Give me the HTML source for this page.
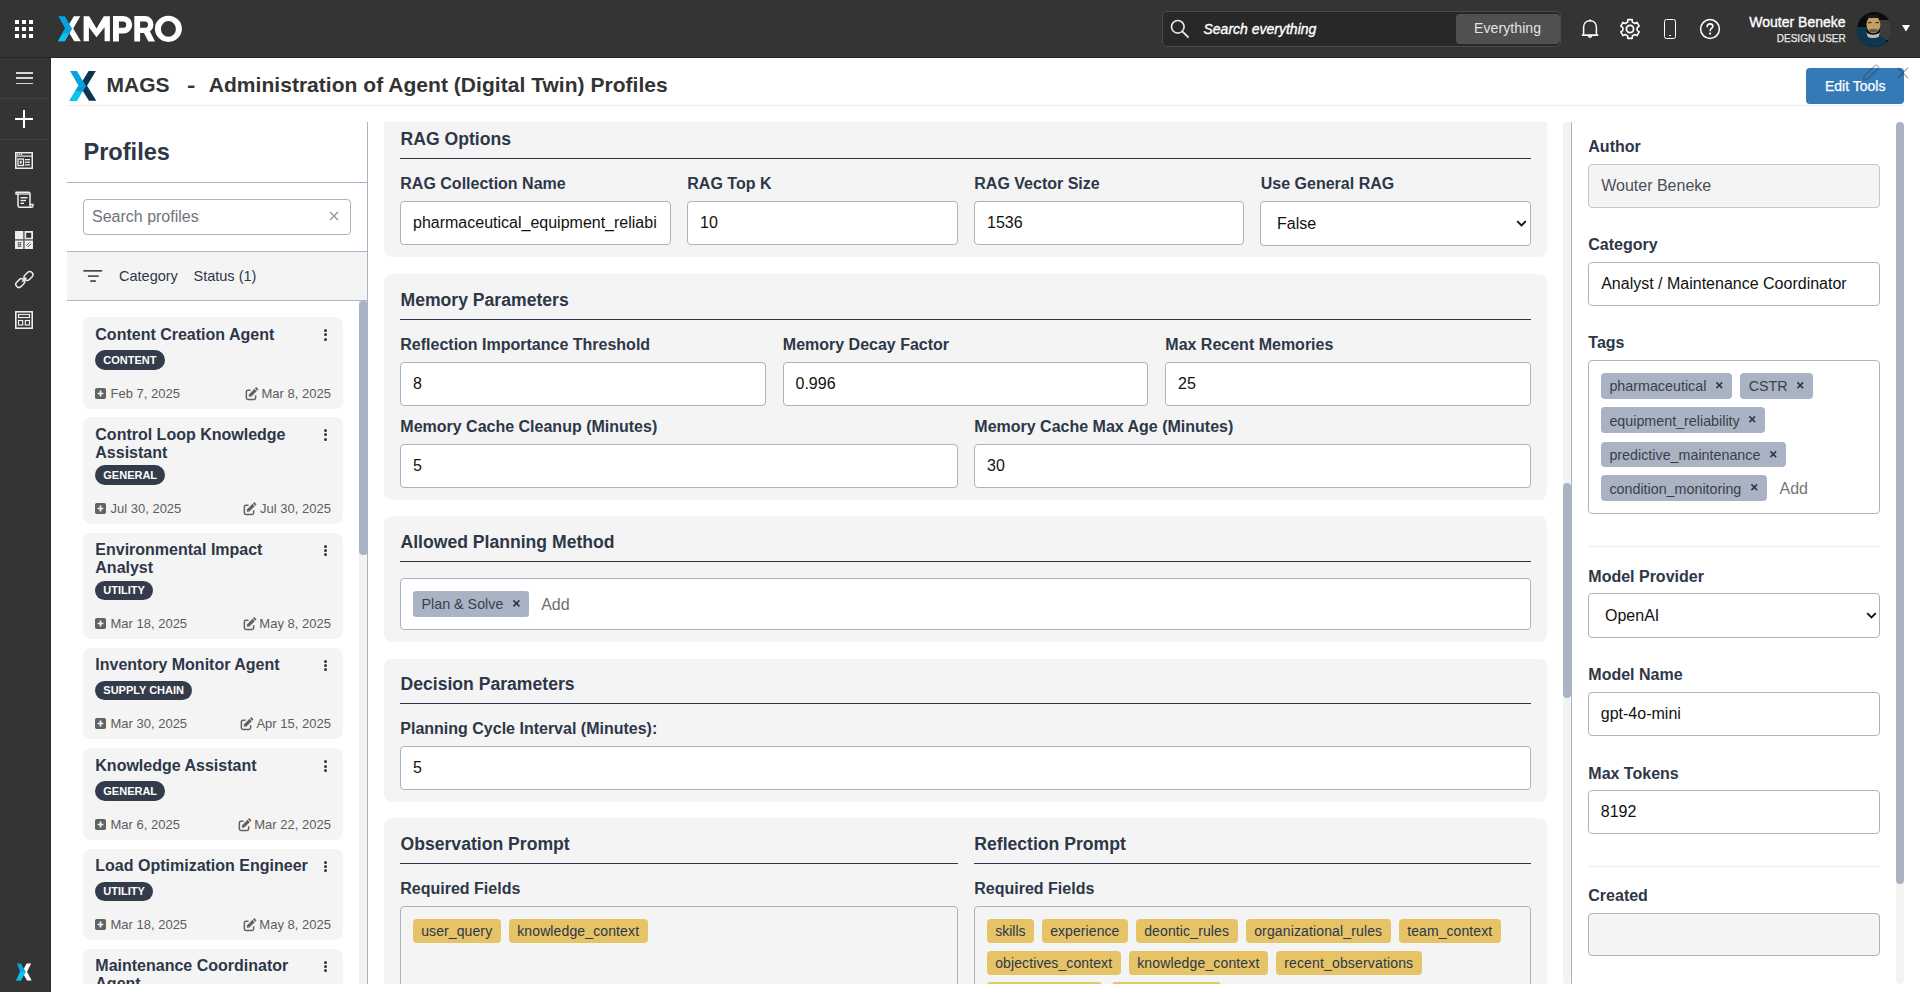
<!DOCTYPE html>
<html><head><meta charset="utf-8"><title>MAGS - Administration of Agent Profiles</title>
<style>
html,body{margin:0;padding:0;width:1920px;height:992px;overflow:hidden;background:#fff;}
body{position:relative;font-family:"Liberation Sans",sans-serif;}
.t{position:absolute;line-height:1;white-space:nowrap;}
.r{position:absolute;}
</style></head><body>
<div class="r" style="left:0.00px;top:0.00px;width:1920.00px;height:57.00px;background:#343434"></div>
<div class="r" style="left:0.00px;top:57.00px;width:1920.00px;height:1.00px;background:#262626"></div>
<div class="r" style="left:0.00px;top:58.00px;width:50.00px;height:934.00px;background:#343434"></div>
<div class="r" style="left:50.00px;top:58.00px;width:1.00px;height:934.00px;background:#2a2e31"></div>
<div class="r" style="left:14.90px;top:19.90px;width:4.30px;height:4.30px;background:#fff"></div>
<div class="r" style="left:14.90px;top:26.75px;width:4.30px;height:4.30px;background:#fff"></div>
<div class="r" style="left:14.90px;top:33.60px;width:4.30px;height:4.30px;background:#fff"></div>
<div class="r" style="left:21.75px;top:19.90px;width:4.30px;height:4.30px;background:#fff"></div>
<div class="r" style="left:21.75px;top:26.75px;width:4.30px;height:4.30px;background:#fff"></div>
<div class="r" style="left:21.75px;top:33.60px;width:4.30px;height:4.30px;background:#fff"></div>
<div class="r" style="left:28.60px;top:19.90px;width:4.30px;height:4.30px;background:#fff"></div>
<div class="r" style="left:28.60px;top:26.75px;width:4.30px;height:4.30px;background:#fff"></div>
<div class="r" style="left:28.60px;top:33.60px;width:4.30px;height:4.30px;background:#fff"></div>
<svg class="r" style="left:0px;top:0px" width="200" height="58" viewBox="0 0 200 58">
<polygon points="73.9,16.2 80.3,16.2 73.2,28.4 80.9,41.2 74.2,41.2 66.5,28.4" fill="#fff"/>
<polygon points="58.3,16.2 64.8,16.2 72,28.4 64.8,41.2 57.9,41.2 65.2,28.4" fill="#08a2de"/>
<polygon points="65.2,28.4 72,28.4 64.8,41.2 57.9,41.2" fill="#10c0ee"/>
<polygon points="65.2,28.4 72,28.4 69.2,33.2 62.4,33.2" fill="#0a9bd8"/>
<polygon points="83.6,41.2 83.6,16.2 89.2,16.2 96.5,28.4 103.8,16.2 109.9,16.2 109.9,41.2 104.6,41.2 104.6,27.3 96.5,37.2 88.9,27.3 88.9,41.2" fill="#fff"/>
<path fill-rule="evenodd" fill="#fff" d="M113,41.5 V16 H123.4 A8.8,8.8 0 0 1 123.4,33.6 H118.9 V41.5 Z M118.9,21.5 H123.05 A3.15,3.15 0 0 1 123.05,27.8 H118.9 Z"/>
<path fill-rule="evenodd" fill="#fff" d="M134.3,41.5 V16 H145 A8.5,8.5 0 0 1 145,33 H140.1 V41.5 Z M140.1,21.5 H144.85 A3.15,3.15 0 0 1 144.85,27.8 H140.1 Z"/>
<polygon points="143.5,32 149.5,30.5 155,41.5 148.4,41.5" fill="#fff"/>
<path fill-rule="evenodd" fill="#fff" d="M154.9,28.8 A13.5,13.1 0 1 0 181.9,28.8 A13.5,13.1 0 1 0 154.9,28.8 Z M160.9,28.9 A7.5,7.8 0 1 0 175.9,28.9 A7.5,7.8 0 1 0 160.9,28.9 Z"/>
</svg>
<div class="r" style="left:1162.00px;top:11.00px;width:399.00px;height:36.00px;background:#282828;border:1px solid #4a4a4a;border-radius:5px;box-sizing:border-box"></div>
<svg class="r" style="left:1170px;top:19px" width="20" height="20" viewBox="0 0 20 20">
<circle cx="7.8" cy="7.8" r="6.3" fill="none" stroke="#e6e6e6" stroke-width="1.7"/>
<line x1="12.3" y1="12.3" x2="18" y2="18" stroke="#e6e6e6" stroke-width="1.8" stroke-linecap="round"/></svg>
<div class="t" style="left:1203.50px;top:22.25px;font-size:14px;color:#ffffff;font-style:italic;-webkit-text-stroke:0.35px #fff">Search everything</div>
<div class="r" style="left:1456.00px;top:14.00px;width:104.00px;height:30.00px;background:#505050;border-radius:4px"></div>
<div class="t" style="left:1474.00px;top:21.35px;font-size:14px;color:#e4e4e4;letter-spacing:0.1px">Everything</div>
<svg class="r" style="left:1580px;top:18px" width="20" height="22" viewBox="0 0 20 22">
<path d="M3.6 16.6 V9.2 C3.6 5.2 6.2 2.7 10 2.7 C13.8 2.7 16.4 5.2 16.4 9.2 V16.6" fill="none" stroke="#fff" stroke-width="1.5"/>
<path d="M2.4 17.1 H17.7" stroke="#fff" stroke-width="1.6" stroke-linecap="round"/>
<path d="M8.4 17.6 A1.6 1.6 0 0 0 11.6 17.6" fill="none" stroke="#fff" stroke-width="1.5"/>
<path d="M8.9 2.8 L10 1.4 L11.1 2.8 Z" fill="#fff" stroke="#fff" stroke-width="0.6"/></svg>
<svg class="r" style="left:1619.3px;top:17.9px" width="22" height="22" viewBox="0 0 22 22">
<path d="M8.62 4.10 L8.84 1.65 L13.16 1.65 L13.38 4.10 L15.79 5.49 L18.02 4.45 L20.18 8.19 L18.17 9.61 L18.17 12.39 L20.18 13.81 L18.02 17.55 L15.79 16.51 L13.38 17.90 L13.16 20.35 L8.84 20.35 L8.62 17.90 L6.21 16.51 L3.98 17.55 L1.82 13.81 L3.83 12.39 L3.83 9.61 L1.82 8.19 L3.98 4.45 L6.21 5.49 Z" fill="none" stroke="#fff" stroke-width="1.6" stroke-linejoin="round"/>
<circle cx="11" cy="11" r="3.6" fill="none" stroke="#fff" stroke-width="1.8"/></svg>
<div class="r" style="left:1663.60px;top:19.10px;width:12.70px;height:19.60px;border:1.5px solid #fff;border-radius:2.5px;box-sizing:border-box"></div>
<div class="r" style="left:1669.00px;top:34.60px;width:1.80px;height:1.30px;background:#fff"></div>
<svg class="r" style="left:1699px;top:18px" width="22" height="22" viewBox="0 0 22 22">
<circle cx="11" cy="11" r="9.4" fill="none" stroke="#fff" stroke-width="1.5"/>
<path d="M8.2 8.6 C8.2 6.9 9.5 5.9 11 5.9 C12.6 5.9 13.8 6.9 13.8 8.4 C13.8 10.4 11.2 10.5 11.2 12.6" fill="none" stroke="#fff" stroke-width="1.6" stroke-linecap="round"/>
<circle cx="11.1" cy="15.6" r="1.1" fill="#fff"/></svg>
<div class="t" style="left:1749.30px;top:14.85px;font-size:14px;color:#ffffff;-webkit-text-stroke:0.35px #fff">Wouter Beneke</div>
<div class="t" style="left:1776.80px;top:34.05px;font-size:10px;color:#e8e8e8;-webkit-text-stroke:0.25px #e8e8e8">DESIGN USER</div>
<svg class="r" style="left:1850px;top:8px" width="50" height="44" viewBox="1850 8 50 44">
<defs><clipPath id="av"><circle cx="1874.4" cy="29.6" r="17.5"/></clipPath></defs>
<g clip-path="url(#av)">
<rect x="1850" y="8" width="50" height="44" fill="#0c0c0c"/>
<rect x="1880" y="20" width="14" height="20" fill="#3c3c3c"/>
<path d="M1850 27 H1866 L1868 36 L1882 36 L1886 40 V52 H1850 Z" fill="#0b3a50"/>
<path d="M1866.5 32 C1868 35.5 1878 35.5 1880 32 L1879 36.5 C1876 38.5 1870 38.5 1867.5 36.5 Z" fill="#b9b9b9"/>
<ellipse cx="1873.4" cy="24.6" rx="7" ry="8.6" fill="#c4a063"/>
<rect x="1868" y="22" width="3.5" height="1.2" fill="#3a3024"/><rect x="1875.5" y="22" width="3.5" height="1.2" fill="#3a3024"/>
<path d="M1869 29.5 Q1873.4 28 1878 29.5 L1877.5 31.5 Q1873.4 33.5 1869.5 31.5 Z" fill="#6a5a40"/>
<rect x="1868" y="15" width="11" height="3" fill="#1a1a1a"/>
</g></svg>
<svg class="r" style="left:1901px;top:24px" width="10" height="8" viewBox="0 0 10 8"><polygon points="1,1 9,1 5,7.5" fill="#fff"/></svg>
<div class="r" style="left:15.50px;top:72.25px;width:17.30px;height:1.30px;background:#d6d6d6"></div>
<div class="r" style="left:15.50px;top:77.45px;width:17.30px;height:1.30px;background:#d6d6d6"></div>
<div class="r" style="left:15.50px;top:82.75px;width:17.30px;height:1.30px;background:#d6d6d6"></div>
<div class="r" style="left:0.00px;top:98.00px;width:50.00px;height:1.00px;background:#3f4449"></div>
<div class="r" style="left:23.25px;top:110.00px;width:1.50px;height:18.00px;background:#fff"></div>
<div class="r" style="left:15.00px;top:118.25px;width:18.00px;height:1.50px;background:#fff"></div>
<div class="r" style="left:0.00px;top:139.00px;width:50.00px;height:1.00px;background:#3f4449"></div>
<svg class="r" style="left:15px;top:152px" width="18" height="17" viewBox="0 0 18 17">
<rect x="0.75" y="0.75" width="16.5" height="15.5" fill="none" stroke="#eee" stroke-width="1.5"/>
<rect x="0.75" y="3.5" width="16.5" height="1.2" fill="#eee"/>
<rect x="2" y="1.6" width="1.3" height="1.3" fill="#eee"/><rect x="4" y="1.6" width="1.3" height="1.3" fill="#eee"/><rect x="6" y="1.6" width="1.3" height="1.3" fill="#eee"/>
<rect x="3" y="7" width="5.5" height="6.5" fill="none" stroke="#eee" stroke-width="1.3"/>
<rect x="4.7" y="8.8" width="2" height="2.8" fill="#eee"/>
<rect x="10" y="7" width="5" height="1.3" fill="#eee"/><rect x="10" y="9.6" width="5" height="1.3" fill="#eee"/><rect x="10" y="12.2" width="5" height="1.3" fill="#eee"/>
</svg>
<svg class="r" style="left:15px;top:191px" width="19" height="18" viewBox="0 0 19 18">
<path d="M1 1.2 H13.5 C14.6 1.2 15 1.8 15 2.8 V14.5 C15 15.6 15.5 16.2 16.5 16.2 H4.5 C3.5 16.2 3 15.6 3 14.5 V3 H1 Z" fill="none" stroke="#eee" stroke-width="1.5" stroke-linejoin="round"/>
<path d="M3 3 H15" stroke="#eee" stroke-width="1.3"/>
<path d="M15 13.5 H18 V15 C18 15.8 17.5 16.2 16.5 16.2" fill="none" stroke="#eee" stroke-width="1.4"/>
<rect x="5.5" y="6" width="7" height="1.4" fill="#eee"/><rect x="5.5" y="8.8" width="5.5" height="1.4" fill="#eee"/><rect x="5.5" y="11.6" width="3.5" height="1.4" fill="#eee"/>
</svg>
<svg class="r" style="left:15px;top:231px" width="18" height="18" viewBox="0 0 18 18">
<rect x="0" y="0" width="18" height="18" fill="#eeeeee"/>
<rect x="8.2" y="0" width="1.4" height="18" fill="#5a5a5a"/>
<rect x="0" y="8.2" width="18" height="1.4" fill="#5a5a5a"/>
<rect x="11.2" y="1.8" width="5" height="5" fill="#343434"/>
<path d="M2.6 11.8h3.8M2.6 13.6h3.8M2.6 15.4h3.8M3.6 11.2v5M5.4 11.2v5" stroke="#555" stroke-width="0.7"/>
<path d="M11.5 14.5 L14.5 11.5 M12.8 16 L16 12.8" stroke="#555" stroke-width="1"/>
</svg>
<svg class="r" style="left:14px;top:270px" width="20" height="20" viewBox="0 0 20 20">
<rect x="9.6" y="2.9" width="9.8" height="6.2" rx="3.1" transform="rotate(-45 14.5 6)" fill="none" stroke="#eee" stroke-width="1.5"/>
<rect x="1.3" y="10" width="9.8" height="6.2" rx="3.1" transform="rotate(-45 6.2 13.1)" fill="none" stroke="#eee" stroke-width="1.5"/>
<path d="M8.2 11.8 L12.4 7.6" stroke="#eee" stroke-width="1.5"/>
</svg>
<svg class="r" style="left:15px;top:311px" width="18" height="18" viewBox="0 0 18 18">
<rect x="0.8" y="0.8" width="16.4" height="16.4" fill="none" stroke="#eee" stroke-width="1.6"/>
<rect x="3.5" y="3.5" width="11" height="3" fill="none" stroke="#eee" stroke-width="1.2"/>
<rect x="3.5" y="9.5" width="4.2" height="4.5" fill="none" stroke="#eee" stroke-width="1.2"/>
<rect x="10.3" y="9.5" width="4.2" height="4.5" fill="none" stroke="#eee" stroke-width="1.2"/>
</svg>
<svg class="r" style="left:0px;top:950px" width="50" height="40" viewBox="0 950 50 40">
<polygon points="26.7,963.4 31.2,963.4 27,971.8 31.7,980.5 27,980.5 22,971.8" fill="#fff"/>
<polygon points="16.9,963.4 20.9,963.4 25.7,971.8 20.9,980.5 16.1,980.5 20.2,971.8" fill="#0aa6e0"/>
<polygon points="20.2,971.8 25.7,971.8 20.9,980.5 16.1,980.5" fill="#0bc0ec"/>
</svg>
<svg class="r" style="left:60px;top:66px" width="45" height="40" viewBox="60 66 45 40">
<polygon points="88.6,71.04 95.85,71.04 87,85.76 96.3,100.7 89,100.7 79.5,85.76" fill="#0b3550"/>
<polygon points="70.05,71.04 76.9,71.04 85.8,85.76 76.9,100.7 69.4,100.7 78.5,85.76" fill="#06a2de"/>
<polygon points="78.5,85.76 85.8,85.76 76.9,100.7 69.4,100.7" fill="#0ac6ec"/>
<polygon points="78.5,85.76 85.8,85.76 82.6,91 75.3,91" fill="#0a98d6"/>
</svg>
<div class="t" style="left:106.50px;top:74.10px;font-size:21px;font-weight:bold;color:#333333;">MAGS</div>
<div class="t" style="left:186.50px;top:74.10px;font-size:21px;font-weight:bold;color:#333333;transform:scaleX(1.2);transform-origin:left">-</div>
<div class="t" style="left:208.80px;top:74.10px;font-size:21px;font-weight:bold;color:#333333;letter-spacing:0.035px">Administration of Agent (Digital Twin) Profiles</div>
<div class="r" style="left:67.00px;top:105.00px;width:1837.00px;height:1.00px;background:#eeeeee"></div>
<div class="r" style="left:1806.00px;top:68.00px;width:98.00px;height:36.00px;background:#337ab7;border-radius:4px"></div>
<div class="t" style="left:1825.00px;top:78.65px;font-size:14px;color:#ffffff;-webkit-text-stroke:0.25px #fff">Edit Tools</div>
<svg class="r" style="left:1850px;top:58px" width="70" height="30" viewBox="1850 58 70 30">
<path d="M1863.4 79.9 L1864.6 75.8 L1874.6 65.8 C1875.5 64.9 1876.9 64.9 1877.8 65.8 C1878.7 66.7 1878.7 68.1 1877.8 69 L1867.8 79 Z" fill="none" stroke="rgba(40,50,60,0.42)" stroke-width="1.1" stroke-linejoin="round"/>
<path d="M1897.8 67.7 L1908 78 M1908 67.7 L1897.8 78" stroke="rgba(40,50,60,0.40)" stroke-width="1.3"/></svg>
<div class="r" style="left:367.00px;top:122.00px;width:1.00px;height:862.00px;background:#a9b3c4"></div>
<div class="t" style="left:83.40px;top:141.00px;font-size:23.6px;font-weight:bold;color:#2d3748;">Profiles</div>
<div class="r" style="left:67.00px;top:182.00px;width:300.00px;height:1.00px;background:#a9b3c4"></div>
<div class="r" style="left:83.00px;top:199.00px;width:267.50px;height:35.50px;border:1px solid #a9b3c4;border-radius:4px;box-sizing:border-box;background:#fff"></div>
<div class="t" style="left:92.00px;top:209.20px;font-size:16px;color:#6f7378;">Search profiles</div>
<svg class="r" style="left:329px;top:211px" width="10" height="10" viewBox="0 0 10 10">
<path d="M1 1 L9 9 M9 1 L1 9" stroke="#8a94a6" stroke-width="1.3"/></svg>
<div class="r" style="left:67.00px;top:251.00px;width:300.00px;height:50.00px;background:#f4f4f4;border-top:1px solid #a9b3c4;border-bottom:1px solid #a9b3c4;box-sizing:border-box"></div>
<svg class="r" style="left:83px;top:269px" width="20" height="14" viewBox="0 0 20 14">
<rect x="0.4" y="1" width="18.8" height="1.7" fill="#3f4655"/>
<rect x="4.9" y="6.3" width="10.9" height="1.6" fill="#3f4655"/>
<rect x="7.3" y="11.2" width="5.5" height="1.7" fill="#3f4655"/></svg>
<div class="t" style="left:119.00px;top:269.15px;font-size:14.5px;color:#2d3748;">Category</div>
<div class="t" style="left:193.50px;top:269.15px;font-size:14.5px;color:#2d3748;">Status (1)</div>
<div class="r" style="left:67px;top:301px;width:300px;height:683px;overflow:hidden">
<div class="r" style="left:292.00px;top:0.00px;width:8.50px;height:683.00px;background:#f3f3f3"></div>
<div class="r" style="left:292.00px;top:0.00px;width:8.50px;height:254.00px;background:#a9b3c4;border-radius:4px"></div>
<div class="r" style="left:16.00px;top:16.00px;width:260.00px;height:91.75px;background:#f4f4f4;border-radius:8px"></div>
<div class="t" style="left:28.30px;top:25.50px;font-size:16px;font-weight:bold;color:#2d3748;">Content Creation Agent</div>
<div class="r" style="left:257.00px;top:28.10px;width:3.00px;height:3.00px;background:#2d3748;border-radius:50%"></div>
<div class="r" style="left:257.00px;top:32.40px;width:3.00px;height:3.00px;background:#2d3748;border-radius:50%"></div>
<div class="r" style="left:257.00px;top:36.70px;width:3.00px;height:3.00px;background:#2d3748;border-radius:50%"></div>
<div class="r" style="left:28.00px;top:49.00px;width:69.76px;height:19.50px;background:#343b4b;border-radius:10px"></div>
<div class="t" style="left:36.30px;top:53.90px;font-size:11px;font-weight:bold;color:#ffffff;">CONTENT</div>
<svg class="r" style="left:28.10px;top:86.60px" width="11" height="11" viewBox="0 0 11 11"><rect x="0" y="0" width="11" height="11" rx="1.8" fill="#626262"/><path d="M5.5 2.6v5.8M2.6 5.5h5.8" stroke="#f4f4f4" stroke-width="1.7"/></svg>
<div class="t" style="left:43.50px;top:85.70px;font-size:13px;color:#5c5c5c;">Feb 7, 2025</div>
<div class="t" style="left:194.51px;top:85.70px;font-size:13px;color:#5c5c5c;">Mar 8, 2025</div>
<svg class="r" style="left:177.81px;top:85.50px" width="16" height="15" viewBox="0 -0.5 16 15">
<path d="M5.5 2.65 H3 C1.9 2.65 1.35 3.2 1.35 4.3 V10.3 C1.35 11.4 1.9 11.95 3 11.95 H9 C10.1 11.95 10.65 11.4 10.65 10.3 V7.7" fill="none" stroke="#626262" stroke-width="1.5"/>
<polygon points="3.8,9.3 4.17,6.67 9.47,1.37 11.73,3.63 6.43,8.93" fill="#626262"/>
<polygon points="9.97,0.87 11.24,-0.4 13.5,1.86 12.23,3.13" fill="#626262"/></svg>
<div class="r" style="left:16.00px;top:116.00px;width:260.00px;height:106.75px;background:#f4f4f4;border-radius:8px"></div>
<div class="t" style="left:28.30px;top:125.50px;font-size:16px;font-weight:bold;color:#2d3748;">Control Loop Knowledge</div>
<div class="t" style="left:28.30px;top:143.50px;font-size:16px;font-weight:bold;color:#2d3748;">Assistant</div>
<div class="r" style="left:257.00px;top:128.10px;width:3.00px;height:3.00px;background:#2d3748;border-radius:50%"></div>
<div class="r" style="left:257.00px;top:132.40px;width:3.00px;height:3.00px;background:#2d3748;border-radius:50%"></div>
<div class="r" style="left:257.00px;top:136.70px;width:3.00px;height:3.00px;background:#2d3748;border-radius:50%"></div>
<div class="r" style="left:28.00px;top:164.00px;width:70.38px;height:19.50px;background:#343b4b;border-radius:10px"></div>
<div class="t" style="left:36.30px;top:168.90px;font-size:11px;font-weight:bold;color:#ffffff;">GENERAL</div>
<svg class="r" style="left:28.10px;top:201.60px" width="11" height="11" viewBox="0 0 11 11"><rect x="0" y="0" width="11" height="11" rx="1.8" fill="#626262"/><path d="M5.5 2.6v5.8M2.6 5.5h5.8" stroke="#f4f4f4" stroke-width="1.7"/></svg>
<div class="t" style="left:43.50px;top:200.70px;font-size:13px;color:#5c5c5c;">Jul 30, 2025</div>
<div class="t" style="left:193.04px;top:200.70px;font-size:13px;color:#5c5c5c;">Jul 30, 2025</div>
<svg class="r" style="left:176.34px;top:200.50px" width="16" height="15" viewBox="0 -0.5 16 15">
<path d="M5.5 2.65 H3 C1.9 2.65 1.35 3.2 1.35 4.3 V10.3 C1.35 11.4 1.9 11.95 3 11.95 H9 C10.1 11.95 10.65 11.4 10.65 10.3 V7.7" fill="none" stroke="#626262" stroke-width="1.5"/>
<polygon points="3.8,9.3 4.17,6.67 9.47,1.37 11.73,3.63 6.43,8.93" fill="#626262"/>
<polygon points="9.97,0.87 11.24,-0.4 13.5,1.86 12.23,3.13" fill="#626262"/></svg>
<div class="r" style="left:16.00px;top:231.50px;width:260.00px;height:106.75px;background:#f4f4f4;border-radius:8px"></div>
<div class="t" style="left:28.30px;top:241.00px;font-size:16px;font-weight:bold;color:#2d3748;">Environmental Impact</div>
<div class="t" style="left:28.30px;top:259.00px;font-size:16px;font-weight:bold;color:#2d3748;">Analyst</div>
<div class="r" style="left:257.00px;top:243.60px;width:3.00px;height:3.00px;background:#2d3748;border-radius:50%"></div>
<div class="r" style="left:257.00px;top:247.90px;width:3.00px;height:3.00px;background:#2d3748;border-radius:50%"></div>
<div class="r" style="left:257.00px;top:252.20px;width:3.00px;height:3.00px;background:#2d3748;border-radius:50%"></div>
<div class="r" style="left:28.00px;top:279.50px;width:58.16px;height:19.50px;background:#343b4b;border-radius:10px"></div>
<div class="t" style="left:36.30px;top:284.40px;font-size:11px;font-weight:bold;color:#ffffff;">UTILITY</div>
<svg class="r" style="left:28.10px;top:317.10px" width="11" height="11" viewBox="0 0 11 11"><rect x="0" y="0" width="11" height="11" rx="1.8" fill="#626262"/><path d="M5.5 2.6v5.8M2.6 5.5h5.8" stroke="#f4f4f4" stroke-width="1.7"/></svg>
<div class="t" style="left:43.50px;top:316.20px;font-size:13px;color:#5c5c5c;">Mar 18, 2025</div>
<div class="t" style="left:192.34px;top:316.20px;font-size:13px;color:#5c5c5c;">May 8, 2025</div>
<svg class="r" style="left:175.64px;top:316.00px" width="16" height="15" viewBox="0 -0.5 16 15">
<path d="M5.5 2.65 H3 C1.9 2.65 1.35 3.2 1.35 4.3 V10.3 C1.35 11.4 1.9 11.95 3 11.95 H9 C10.1 11.95 10.65 11.4 10.65 10.3 V7.7" fill="none" stroke="#626262" stroke-width="1.5"/>
<polygon points="3.8,9.3 4.17,6.67 9.47,1.37 11.73,3.63 6.43,8.93" fill="#626262"/>
<polygon points="9.97,0.87 11.24,-0.4 13.5,1.86 12.23,3.13" fill="#626262"/></svg>
<div class="r" style="left:16.00px;top:346.50px;width:260.00px;height:91.75px;background:#f4f4f4;border-radius:8px"></div>
<div class="t" style="left:28.30px;top:356.00px;font-size:16px;font-weight:bold;color:#2d3748;">Inventory Monitor Agent</div>
<div class="r" style="left:257.00px;top:358.60px;width:3.00px;height:3.00px;background:#2d3748;border-radius:50%"></div>
<div class="r" style="left:257.00px;top:362.90px;width:3.00px;height:3.00px;background:#2d3748;border-radius:50%"></div>
<div class="r" style="left:257.00px;top:367.20px;width:3.00px;height:3.00px;background:#2d3748;border-radius:50%"></div>
<div class="r" style="left:28.00px;top:379.50px;width:97.29px;height:19.50px;background:#343b4b;border-radius:10px"></div>
<div class="t" style="left:36.30px;top:384.40px;font-size:11px;font-weight:bold;color:#ffffff;">SUPPLY CHAIN</div>
<svg class="r" style="left:28.10px;top:417.10px" width="11" height="11" viewBox="0 0 11 11"><rect x="0" y="0" width="11" height="11" rx="1.8" fill="#626262"/><path d="M5.5 2.6v5.8M2.6 5.5h5.8" stroke="#f4f4f4" stroke-width="1.7"/></svg>
<div class="t" style="left:43.50px;top:416.20px;font-size:13px;color:#5c5c5c;">Mar 30, 2025</div>
<div class="t" style="left:189.43px;top:416.20px;font-size:13px;color:#5c5c5c;">Apr 15, 2025</div>
<svg class="r" style="left:172.73px;top:416.00px" width="16" height="15" viewBox="0 -0.5 16 15">
<path d="M5.5 2.65 H3 C1.9 2.65 1.35 3.2 1.35 4.3 V10.3 C1.35 11.4 1.9 11.95 3 11.95 H9 C10.1 11.95 10.65 11.4 10.65 10.3 V7.7" fill="none" stroke="#626262" stroke-width="1.5"/>
<polygon points="3.8,9.3 4.17,6.67 9.47,1.37 11.73,3.63 6.43,8.93" fill="#626262"/>
<polygon points="9.97,0.87 11.24,-0.4 13.5,1.86 12.23,3.13" fill="#626262"/></svg>
<div class="r" style="left:16.00px;top:447.25px;width:260.00px;height:91.75px;background:#f4f4f4;border-radius:8px"></div>
<div class="t" style="left:28.30px;top:456.75px;font-size:16px;font-weight:bold;color:#2d3748;">Knowledge Assistant</div>
<div class="r" style="left:257.00px;top:459.35px;width:3.00px;height:3.00px;background:#2d3748;border-radius:50%"></div>
<div class="r" style="left:257.00px;top:463.65px;width:3.00px;height:3.00px;background:#2d3748;border-radius:50%"></div>
<div class="r" style="left:257.00px;top:467.95px;width:3.00px;height:3.00px;background:#2d3748;border-radius:50%"></div>
<div class="r" style="left:28.00px;top:480.25px;width:70.38px;height:19.50px;background:#343b4b;border-radius:10px"></div>
<div class="t" style="left:36.30px;top:485.15px;font-size:11px;font-weight:bold;color:#ffffff;">GENERAL</div>
<svg class="r" style="left:28.10px;top:517.85px" width="11" height="11" viewBox="0 0 11 11"><rect x="0" y="0" width="11" height="11" rx="1.8" fill="#626262"/><path d="M5.5 2.6v5.8M2.6 5.5h5.8" stroke="#f4f4f4" stroke-width="1.7"/></svg>
<div class="t" style="left:43.50px;top:516.95px;font-size:13px;color:#5c5c5c;">Mar 6, 2025</div>
<div class="t" style="left:187.27px;top:516.95px;font-size:13px;color:#5c5c5c;">Mar 22, 2025</div>
<svg class="r" style="left:170.57px;top:516.75px" width="16" height="15" viewBox="0 -0.5 16 15">
<path d="M5.5 2.65 H3 C1.9 2.65 1.35 3.2 1.35 4.3 V10.3 C1.35 11.4 1.9 11.95 3 11.95 H9 C10.1 11.95 10.65 11.4 10.65 10.3 V7.7" fill="none" stroke="#626262" stroke-width="1.5"/>
<polygon points="3.8,9.3 4.17,6.67 9.47,1.37 11.73,3.63 6.43,8.93" fill="#626262"/>
<polygon points="9.97,0.87 11.24,-0.4 13.5,1.86 12.23,3.13" fill="#626262"/></svg>
<div class="r" style="left:16.00px;top:547.50px;width:260.00px;height:91.75px;background:#f4f4f4;border-radius:8px"></div>
<div class="t" style="left:28.30px;top:557.00px;font-size:16px;font-weight:bold;color:#2d3748;">Load Optimization Engineer</div>
<div class="r" style="left:257.00px;top:559.60px;width:3.00px;height:3.00px;background:#2d3748;border-radius:50%"></div>
<div class="r" style="left:257.00px;top:563.90px;width:3.00px;height:3.00px;background:#2d3748;border-radius:50%"></div>
<div class="r" style="left:257.00px;top:568.20px;width:3.00px;height:3.00px;background:#2d3748;border-radius:50%"></div>
<div class="r" style="left:28.00px;top:580.50px;width:58.16px;height:19.50px;background:#343b4b;border-radius:10px"></div>
<div class="t" style="left:36.30px;top:585.40px;font-size:11px;font-weight:bold;color:#ffffff;">UTILITY</div>
<svg class="r" style="left:28.10px;top:618.10px" width="11" height="11" viewBox="0 0 11 11"><rect x="0" y="0" width="11" height="11" rx="1.8" fill="#626262"/><path d="M5.5 2.6v5.8M2.6 5.5h5.8" stroke="#f4f4f4" stroke-width="1.7"/></svg>
<div class="t" style="left:43.50px;top:617.20px;font-size:13px;color:#5c5c5c;">Mar 18, 2025</div>
<div class="t" style="left:192.34px;top:617.20px;font-size:13px;color:#5c5c5c;">May 8, 2025</div>
<svg class="r" style="left:175.64px;top:617.00px" width="16" height="15" viewBox="0 -0.5 16 15">
<path d="M5.5 2.65 H3 C1.9 2.65 1.35 3.2 1.35 4.3 V10.3 C1.35 11.4 1.9 11.95 3 11.95 H9 C10.1 11.95 10.65 11.4 10.65 10.3 V7.7" fill="none" stroke="#626262" stroke-width="1.5"/>
<polygon points="3.8,9.3 4.17,6.67 9.47,1.37 11.73,3.63 6.43,8.93" fill="#626262"/>
<polygon points="9.97,0.87 11.24,-0.4 13.5,1.86 12.23,3.13" fill="#626262"/></svg>
<div class="r" style="left:16.00px;top:647.50px;width:260.00px;height:106.75px;background:#f4f4f4;border-radius:8px"></div>
<div class="t" style="left:28.30px;top:657.00px;font-size:16px;font-weight:bold;color:#2d3748;">Maintenance Coordinator</div>
<div class="t" style="left:28.30px;top:675.00px;font-size:16px;font-weight:bold;color:#2d3748;">Agent</div>
<div class="r" style="left:257.00px;top:659.60px;width:3.00px;height:3.00px;background:#2d3748;border-radius:50%"></div>
<div class="r" style="left:257.00px;top:663.90px;width:3.00px;height:3.00px;background:#2d3748;border-radius:50%"></div>
<div class="r" style="left:257.00px;top:668.20px;width:3.00px;height:3.00px;background:#2d3748;border-radius:50%"></div>
<div class="r" style="left:28.00px;top:695.50px;width:70.38px;height:19.50px;background:#343b4b;border-radius:10px"></div>
<div class="t" style="left:36.30px;top:700.40px;font-size:11px;font-weight:bold;color:#ffffff;">GENERAL</div>
</div>
<div class="r" style="left:368px;top:122px;width:1203px;height:862px;overflow:hidden">
<div class="r" style="left:1195.00px;top:0.00px;width:8.20px;height:862.00px;background:#f3f3f3;border-radius:4px"></div>
<div class="r" style="left:1195.00px;top:361.00px;width:8.20px;height:215.00px;background:#a9b3c4;border-radius:4px"></div>
<div class="r" style="left:16.00px;top:-9.25px;width:1163.00px;height:144.25px;background:#f4f4f4;border-radius:8px"></div>
<div class="t" style="left:32.50px;top:9.06px;font-size:17.6px;font-weight:bold;color:#2d3748;">RAG Options</div>
<div class="r" style="left:32.00px;top:36.00px;width:1131.00px;height:1.00px;background:#2d3748"></div>
<div class="t" style="left:32.30px;top:54.20px;font-size:16px;font-weight:bold;color:#2d3748;">RAG Collection Name</div>
<div class="t" style="left:319.30px;top:54.20px;font-size:16px;font-weight:bold;color:#2d3748;">RAG Top K</div>
<div class="t" style="left:606.30px;top:54.20px;font-size:16px;font-weight:bold;color:#2d3748;">RAG Vector Size</div>
<div class="t" style="left:892.80px;top:54.20px;font-size:16px;font-weight:bold;color:#2d3748;">Use General RAG</div>
<div class="r" style="left:32.00px;top:79.00px;width:271.00px;height:44.00px;background:#fff;border:1px solid #a9b3c4;border-radius:4px;box-sizing:border-box"></div>
<div class="t" style="left:45.00px;top:93.05px;font-size:16px;color:#111;">pharmaceutical_equipment_reliabi</div>
<div class="r" style="left:319.00px;top:79.00px;width:271.00px;height:44.00px;background:#fff;border:1px solid #a9b3c4;border-radius:4px;box-sizing:border-box"></div>
<div class="t" style="left:332.00px;top:93.05px;font-size:16px;color:#111;">10</div>
<div class="r" style="left:606.00px;top:79.00px;width:270.00px;height:44.00px;background:#fff;border:1px solid #a9b3c4;border-radius:4px;box-sizing:border-box"></div>
<div class="t" style="left:619.00px;top:93.05px;font-size:16px;color:#111;">1536</div>
<div class="r" style="left:892.00px;top:79.00px;width:271.00px;height:45.00px;background:#fff;border:1px solid #a9b3c4;border-radius:4px;box-sizing:border-box"></div>
<div class="t" style="left:909.00px;top:93.50px;font-size:16px;color:#111;">False</div>
<svg class="r" style="left:1148.00px;top:98.00px" width="11" height="7" viewBox="0 0 11 7"><path d="M1.2 1.2 L5.5 5.5 L9.8 1.2" fill="none" stroke="#111" stroke-width="1.8"/></svg>
<div class="r" style="left:16.00px;top:152.00px;width:1163.00px;height:226.00px;background:#f4f4f4;border-radius:8px"></div>
<div class="t" style="left:32.50px;top:169.90px;font-size:17.6px;font-weight:bold;color:#2d3748;">Memory Parameters</div>
<div class="r" style="left:32.00px;top:197.00px;width:1131.00px;height:1.00px;background:#2d3748"></div>
<div class="t" style="left:32.30px;top:215.00px;font-size:16px;font-weight:bold;color:#2d3748;">Reflection Importance Threshold</div>
<div class="r" style="left:32.00px;top:240.00px;width:365.70px;height:44.00px;background:#fff;border:1px solid #a9b3c4;border-radius:4px;box-sizing:border-box"></div>
<div class="t" style="left:45.00px;top:254.05px;font-size:16px;color:#111;">8</div>
<div class="t" style="left:414.80px;top:215.00px;font-size:16px;font-weight:bold;color:#2d3748;">Memory Decay Factor</div>
<div class="r" style="left:414.50px;top:240.00px;width:365.70px;height:44.00px;background:#fff;border:1px solid #a9b3c4;border-radius:4px;box-sizing:border-box"></div>
<div class="t" style="left:427.50px;top:254.05px;font-size:16px;color:#111;">0.996</div>
<div class="t" style="left:797.30px;top:215.00px;font-size:16px;font-weight:bold;color:#2d3748;">Max Recent Memories</div>
<div class="r" style="left:797.00px;top:240.00px;width:366.00px;height:44.00px;background:#fff;border:1px solid #a9b3c4;border-radius:4px;box-sizing:border-box"></div>
<div class="t" style="left:810.00px;top:254.05px;font-size:16px;color:#111;">25</div>
<div class="t" style="left:32.30px;top:297.30px;font-size:16px;font-weight:bold;color:#2d3748;">Memory Cache Cleanup (Minutes)</div>
<div class="r" style="left:32.00px;top:322.00px;width:557.50px;height:44.00px;background:#fff;border:1px solid #a9b3c4;border-radius:4px;box-sizing:border-box"></div>
<div class="t" style="left:45.00px;top:336.05px;font-size:16px;color:#111;">5</div>
<div class="t" style="left:606.30px;top:297.30px;font-size:16px;font-weight:bold;color:#2d3748;">Memory Cache Max Age (Minutes)</div>
<div class="r" style="left:606.00px;top:322.00px;width:557.00px;height:44.00px;background:#fff;border:1px solid #a9b3c4;border-radius:4px;box-sizing:border-box"></div>
<div class="t" style="left:619.00px;top:336.05px;font-size:16px;color:#111;">30</div>
<div class="r" style="left:16.00px;top:394.25px;width:1163.00px;height:125.25px;background:#f4f4f4;border-radius:8px"></div>
<div class="t" style="left:32.50px;top:412.08px;font-size:17.6px;font-weight:bold;color:#2d3748;">Allowed Planning Method</div>
<div class="r" style="left:32.00px;top:439.00px;width:1131.00px;height:1.00px;background:#2d3748"></div>
<div class="r" style="left:32.00px;top:456.00px;width:1131.00px;height:52.00px;background:#fff;border:1px solid #a9b3c4;border-radius:4px;box-sizing:border-box"></div>
<div class="r" style="left:45.00px;top:469.25px;width:115.75px;height:25.35px;background:#a9b3c4;border-radius:3px"></div>
<div class="t" style="left:53.50px;top:475.25px;font-size:14.3px;color:#3a3f47;">Plan &amp; Solve</div>
<svg class="r" style="left:143.90px;top:476.70px" width="8.80" height="8.80" viewBox="-1 -1 8.80 8.80"><path d="M0.4 0.4 L6.40 6.40 M6.40 0.4 L0.4 6.40" stroke="#2d3748" stroke-width="1.6" stroke-linecap="butt"/></svg>
<div class="t" style="left:173.20px;top:474.60px;font-size:16px;color:#6e6e6e;">Add</div>
<div class="r" style="left:16.00px;top:536.50px;width:1163.00px;height:143.10px;background:#f4f4f4;border-radius:8px"></div>
<div class="t" style="left:32.50px;top:554.06px;font-size:17.6px;font-weight:bold;color:#2d3748;">Decision Parameters</div>
<div class="r" style="left:32.00px;top:581.00px;width:1131.00px;height:1.00px;background:#2d3748"></div>
<div class="t" style="left:32.30px;top:599.00px;font-size:16px;font-weight:bold;color:#2d3748;">Planning Cycle Interval (Minutes):</div>
<div class="r" style="left:32.00px;top:624.00px;width:1131.00px;height:44.00px;background:#fff;border:1px solid #a9b3c4;border-radius:4px;box-sizing:border-box"></div>
<div class="t" style="left:45.00px;top:638.05px;font-size:16px;color:#111;">5</div>
<div class="r" style="left:16.00px;top:696.00px;width:1163.00px;height:282.00px;background:#f4f4f4;border-radius:8px"></div>
<div class="t" style="left:32.50px;top:714.06px;font-size:17.6px;font-weight:bold;color:#2d3748;">Observation Prompt</div>
<div class="r" style="left:32.00px;top:741.00px;width:557.50px;height:1.00px;background:#2d3748"></div>
<div class="t" style="left:606.30px;top:714.06px;font-size:17.6px;font-weight:bold;color:#2d3748;">Reflection Prompt</div>
<div class="r" style="left:605.80px;top:741.00px;width:557.20px;height:1.00px;background:#2d3748"></div>
<div class="t" style="left:32.30px;top:759.20px;font-size:16px;font-weight:bold;color:#2d3748;">Required Fields</div>
<div class="t" style="left:606.30px;top:759.20px;font-size:16px;font-weight:bold;color:#2d3748;">Required Fields</div>
<div class="r" style="left:32.00px;top:784.25px;width:557.50px;height:193.75px;background:#f4f4f4;border:1px solid #a9b3c4;border-radius:4px;box-sizing:border-box"></div>
<div class="r" style="left:606.00px;top:784.25px;width:557.00px;height:193.75px;background:#f4f4f4;border:1px solid #a9b3c4;border-radius:4px;box-sizing:border-box"></div>
<div class="r" style="left:45.00px;top:797.00px;width:87.60px;height:23.60px;background:#e5c366;border-radius:4px"></div>
<div class="t" style="left:53.20px;top:802.15px;font-size:14px;color:#2d3748;letter-spacing:0.100px">user_query</div>
<div class="r" style="left:141.00px;top:797.00px;width:138.50px;height:23.60px;background:#e5c366;border-radius:4px"></div>
<div class="t" style="left:149.20px;top:802.15px;font-size:14px;color:#2d3748;letter-spacing:0.123px">knowledge_context</div>
<div class="r" style="left:619.00px;top:797.00px;width:46.90px;height:23.60px;background:#e5c366;border-radius:4px"></div>
<div class="t" style="left:627.20px;top:802.15px;font-size:14px;color:#2d3748;letter-spacing:-0.005px">skills</div>
<div class="r" style="left:674.00px;top:797.00px;width:85.80px;height:23.60px;background:#e5c366;border-radius:4px"></div>
<div class="t" style="left:682.20px;top:802.15px;font-size:14px;color:#2d3748;letter-spacing:0.075px">experience</div>
<div class="r" style="left:768.00px;top:797.00px;width:101.50px;height:23.60px;background:#e5c366;border-radius:4px"></div>
<div class="t" style="left:776.20px;top:802.15px;font-size:14px;color:#2d3748;letter-spacing:0.128px">deontic_rules</div>
<div class="r" style="left:878.00px;top:797.00px;width:144.60px;height:23.60px;background:#e5c366;border-radius:4px"></div>
<div class="t" style="left:886.20px;top:802.15px;font-size:14px;color:#2d3748;letter-spacing:0.138px">organizational_rules</div>
<div class="r" style="left:1031.00px;top:797.00px;width:101.60px;height:23.60px;background:#e5c366;border-radius:4px"></div>
<div class="t" style="left:1039.20px;top:802.15px;font-size:14px;color:#2d3748;letter-spacing:0.082px">team_context</div>
<div class="r" style="left:619.00px;top:829.00px;width:133.60px;height:23.60px;background:#e5c366;border-radius:4px"></div>
<div class="t" style="left:627.20px;top:834.15px;font-size:14px;color:#2d3748;letter-spacing:0.103px">objectives_context</div>
<div class="r" style="left:761.00px;top:829.00px;width:138.80px;height:23.60px;background:#e5c366;border-radius:4px"></div>
<div class="t" style="left:769.20px;top:834.15px;font-size:14px;color:#2d3748;letter-spacing:0.140px">knowledge_context</div>
<div class="r" style="left:908.00px;top:829.00px;width:145.60px;height:23.60px;background:#e5c366;border-radius:4px"></div>
<div class="t" style="left:916.20px;top:834.15px;font-size:14px;color:#2d3748;letter-spacing:0.157px">recent_observations</div>
<div class="r" style="left:619.00px;top:860.40px;width:115.00px;height:23.60px;background:#e5c366;border-radius:4px"></div>
<div class="r" style="left:743.60px;top:860.40px;width:109.40px;height:23.60px;background:#e5c366;border-radius:4px"></div>
</div>
<div class="r" style="left:1571.00px;top:122.00px;width:1.00px;height:862.00px;background:#a9b3c4"></div>
<div class="r" style="left:1896.00px;top:122.00px;width:8.00px;height:862.00px;background:#f3f3f3;border-radius:4px"></div>
<div class="r" style="left:1896.00px;top:122.00px;width:8.00px;height:761.60px;background:#a9b3c4;border-radius:4px"></div>
<div class="t" style="left:1588.30px;top:139.30px;font-size:16px;font-weight:bold;color:#2d3748;">Author</div>
<div class="r" style="left:1588.00px;top:164.00px;width:292.00px;height:44.00px;background:#f4f4f4;border:1px solid #c3c8d0;border-radius:4px;box-sizing:border-box"></div>
<div class="t" style="left:1601.20px;top:178.00px;font-size:16px;color:#4a4f57;">Wouter Beneke</div>
<div class="t" style="left:1588.30px;top:236.90px;font-size:16px;font-weight:bold;color:#2d3748;">Category</div>
<div class="r" style="left:1588.00px;top:262.00px;width:292.00px;height:44.00px;background:#fff;border:1px solid #a9b3c4;border-radius:4px;box-sizing:border-box"></div>
<div class="t" style="left:1601.20px;top:276.00px;font-size:16px;color:#111;">Analyst / Maintenance Coordinator</div>
<div class="t" style="left:1588.30px;top:335.30px;font-size:16px;font-weight:bold;color:#2d3748;">Tags</div>
<div class="r" style="left:1588.00px;top:360.00px;width:292.00px;height:154.00px;background:#fff;border:1px solid #a9b3c4;border-radius:4px;box-sizing:border-box"></div>
<div class="r" style="left:1601.00px;top:373.00px;width:130.60px;height:25.80px;background:#a9b3c4;border-radius:4px"></div>
<div class="t" style="left:1609.40px;top:379.25px;font-size:14.3px;color:#3a3f47;">pharmaceutical</div>
<svg class="r" style="left:1714.60px;top:380.90px" width="8.50" height="8.50" viewBox="-1 -1 8.50 8.50"><path d="M0.4 0.4 L6.10 6.10 M6.10 0.4 L0.4 6.10" stroke="#2d3748" stroke-width="1.5" stroke-linecap="butt"/></svg>
<div class="r" style="left:1740.30px;top:373.00px;width:72.30px;height:25.80px;background:#a9b3c4;border-radius:4px"></div>
<div class="t" style="left:1748.70px;top:379.25px;font-size:14.3px;color:#3a3f47;">CSTR</div>
<svg class="r" style="left:1795.60px;top:380.90px" width="8.50" height="8.50" viewBox="-1 -1 8.50 8.50"><path d="M0.4 0.4 L6.10 6.10 M6.10 0.4 L0.4 6.10" stroke="#2d3748" stroke-width="1.5" stroke-linecap="butt"/></svg>
<div class="r" style="left:1601.00px;top:407.40px;width:164.40px;height:25.80px;background:#a9b3c4;border-radius:4px"></div>
<div class="t" style="left:1609.40px;top:413.65px;font-size:14.3px;color:#3a3f47;">equipment_reliability</div>
<svg class="r" style="left:1748.40px;top:415.30px" width="8.50" height="8.50" viewBox="-1 -1 8.50 8.50"><path d="M0.4 0.4 L6.10 6.10 M6.10 0.4 L0.4 6.10" stroke="#2d3748" stroke-width="1.5" stroke-linecap="butt"/></svg>
<div class="r" style="left:1601.00px;top:441.60px;width:184.80px;height:25.80px;background:#a9b3c4;border-radius:4px"></div>
<div class="t" style="left:1609.40px;top:447.85px;font-size:14.3px;color:#3a3f47;">predictive_maintenance</div>
<svg class="r" style="left:1768.80px;top:449.50px" width="8.50" height="8.50" viewBox="-1 -1 8.50 8.50"><path d="M0.4 0.4 L6.10 6.10 M6.10 0.4 L0.4 6.10" stroke="#2d3748" stroke-width="1.5" stroke-linecap="butt"/></svg>
<div class="r" style="left:1601.00px;top:475.40px;width:165.70px;height:25.80px;background:#a9b3c4;border-radius:4px"></div>
<div class="t" style="left:1609.40px;top:481.65px;font-size:14.3px;color:#3a3f47;">condition_monitoring</div>
<svg class="r" style="left:1749.70px;top:483.30px" width="8.50" height="8.50" viewBox="-1 -1 8.50 8.50"><path d="M0.4 0.4 L6.10 6.10 M6.10 0.4 L0.4 6.10" stroke="#2d3748" stroke-width="1.5" stroke-linecap="butt"/></svg>
<div class="t" style="left:1779.50px;top:480.50px;font-size:16px;color:#777;">Add</div>
<div class="r" style="left:1588.00px;top:546.00px;width:292.00px;height:1.00px;background:#eeeeee"></div>
<div class="t" style="left:1588.30px;top:568.60px;font-size:16px;font-weight:bold;color:#2d3748;">Model Provider</div>
<div class="r" style="left:1588.00px;top:593.00px;width:292.00px;height:45.00px;background:#fff;border:1px solid #a9b3c4;border-radius:4px;box-sizing:border-box"></div>
<div class="t" style="left:1605.00px;top:608.40px;font-size:16px;color:#111;">OpenAI</div>
<svg class="r" style="left:1865.5px;top:611.8px" width="11" height="7" viewBox="0 0 11 7"><path d="M1.2 1.2 L5.5 5.5 L9.8 1.2" fill="none" stroke="#111" stroke-width="1.8"/></svg>
<div class="t" style="left:1588.30px;top:667.30px;font-size:16px;font-weight:bold;color:#2d3748;">Model Name</div>
<div class="r" style="left:1588.00px;top:692.00px;width:292.00px;height:44.00px;background:#fff;border:1px solid #a9b3c4;border-radius:4px;box-sizing:border-box"></div>
<div class="t" style="left:1600.80px;top:706.00px;font-size:16px;color:#111;">gpt-4o-mini</div>
<div class="t" style="left:1588.30px;top:765.60px;font-size:16px;font-weight:bold;color:#2d3748;">Max Tokens</div>
<div class="r" style="left:1588.00px;top:790.00px;width:292.00px;height:44.00px;background:#fff;border:1px solid #a9b3c4;border-radius:4px;box-sizing:border-box"></div>
<div class="t" style="left:1600.80px;top:804.00px;font-size:16px;color:#111;">8192</div>
<div class="r" style="left:1588.00px;top:866.00px;width:292.00px;height:1.00px;background:#eeeeee"></div>
<div class="t" style="left:1588.30px;top:888.00px;font-size:16px;font-weight:bold;color:#2d3748;">Created</div>
<div class="r" style="left:1588.00px;top:913.00px;width:292.00px;height:43.00px;background:#f4f4f4;border:1px solid #a9b3c4;border-radius:4px;box-sizing:border-box"></div>
</body></html>
